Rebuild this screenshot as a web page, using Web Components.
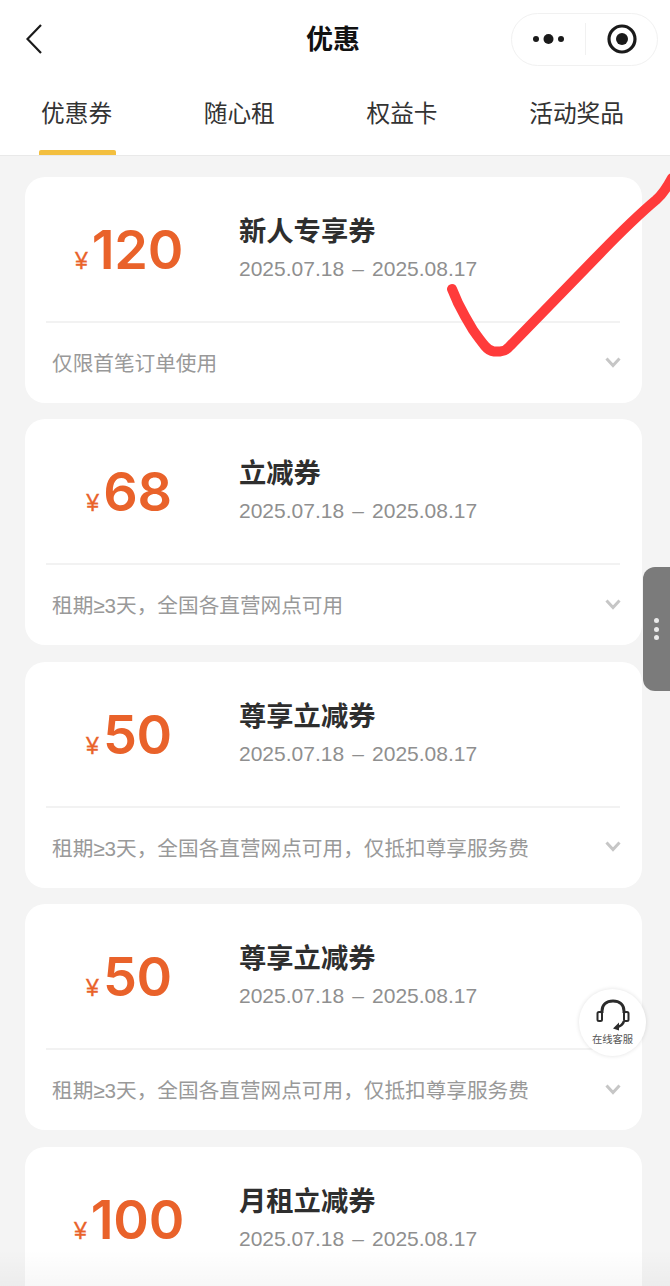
<!DOCTYPE html>
<html lang="zh">
<head>
<meta charset="utf-8">
<title>优惠</title>
<style>
    html, body {
        margin: 0;
        height: 1286px;
        overflow: hidden;
        background: #f4f4f4;
        font-family: "Liberation Sans", "Noto Sans CJK SC", sans-serif;
    }
    body {
        position: relative;
    }
</style>
</head>
<body>
<nav-bar>优惠</nav-bar>
<tab-bar>
    <tab-item active>优惠券</tab-item>
    <tab-item>随心租</tab-item>
    <tab-item>权益卡</tab-item>
    <tab-item>活动奖品</tab-item>
</tab-bar>
<coupon-list>
    <coupon-card amount="120">
        <span slot="title">新人专享券</span>
        <span slot="date">2025.07.18 – 2025.08.17</span>
        <span slot="note">仅限首笔订单使用</span>
    </coupon-card>
    <coupon-card amount="68">
        <span slot="title">立减券</span>
        <span slot="date">2025.07.18 – 2025.08.17</span>
        <span slot="note">租期≥3天，全国各直营网点可用</span>
    </coupon-card>
    <coupon-card amount="50">
        <span slot="title">尊享立减券</span>
        <span slot="date">2025.07.18 – 2025.08.17</span>
        <span slot="note">租期≥3天，全国各直营网点可用，仅抵扣尊享服务费</span>
    </coupon-card>
    <coupon-card amount="50">
        <span slot="title">尊享立减券</span>
        <span slot="date">2025.07.18 – 2025.08.17</span>
        <span slot="note">租期≥3天，全国各直营网点可用，仅抵扣尊享服务费</span>
    </coupon-card>
    <coupon-card amount="100">
        <span slot="title">月租立减券</span>
        <span slot="date">2025.07.18 – 2025.08.17</span>
    </coupon-card>
</coupon-list>
<bottom-fade></bottom-fade>
<check-mark></check-mark>
<side-handle></side-handle>
<service-button>在线客服</service-button>

<script>
class NavBar extends HTMLElement {
    constructor() {
        super();
        this.attachShadow({ mode: 'open' }).innerHTML = `
            <style>
                :host { display: block; background: #fff; }
                .bar { display: grid; grid-template-columns: 1fr auto 1fr; align-items: center; height: 78px; padding: 0 12px 0 8px; }
                .back { display: block; width: 16px; height: 30px; margin: -1px 0 0 18px; }
                .title { font-size: 27px; font-weight: 700; color: #111; line-height: 1; margin-top: 3px; }
                .capsule { justify-self: end; display: flex; align-items: center; width: 147px; height: 53px; box-sizing: border-box; border: 1px solid #f1f1f1; border-radius: 27px; }
                .capsule div { display: flex; align-items: center; justify-content: center; height: 32px; width: 73px; }
                .capsule div + div { border-left: 1px solid #f1f1f1; width: 71px; }
            </style>
            <div class="bar">
                <svg class="back" viewBox="0 0 16 30" fill="none" stroke="#1a1a1a" stroke-width="2.2">
                    <path d="M15 1 L1.5 15 L15 29"/>
                </svg>
                <span class="title"><slot></slot></span>
                <div class="capsule">
                    <div>
                        <svg width="34" height="12" viewBox="0 0 34 12" fill="#1a1a1a">
                            <circle cx="4" cy="6" r="3"/><circle cx="16.5" cy="6" r="5"/><circle cx="29" cy="6" r="3"/>
                        </svg>
                    </div>
                    <div>
                        <svg width="32" height="32" viewBox="0 0 32 32">
                            <circle cx="16" cy="16" r="13" fill="none" stroke="#1a1a1a" stroke-width="3.2"/>
                            <circle cx="16" cy="16" r="6" fill="#1a1a1a"/>
                        </svg>
                    </div>
                </div>
            </div>`;
    }
}

class TabBar extends HTMLElement {
    constructor() {
        super();
        this.attachShadow({ mode: 'open' }).innerHTML = `
            <style>
                :host { display: flex; justify-content: space-between; height: 77px; padding: 0 46px 0 41px; background: #fff; border-bottom: 1px solid #e9e9e9; }
            </style>
            <slot></slot>`;
    }
}

class TabItem extends HTMLElement {
    constructor() {
        super();
        this.attachShadow({ mode: 'open' }).innerHTML = `
            <style>
                :host { display: block; position: relative; font-size: 23.7px; line-height: 72px; height: 77px; color: #333; }
                :host([active])::after { content: ""; position: absolute; left: -2px; right: -4px; bottom: 0; height: 5px; border-radius: 2px 2px 0 0; background: #f3bf3f; }
            </style>
            <slot></slot>`;
    }
}

class CouponList extends HTMLElement {
    constructor() {
        super();
        this.attachShadow({ mode: 'open' }).innerHTML = `
            <style>
                :host { display: flex; flex-direction: column; gap: 16.4px; height: 1109px; overflow: hidden; padding: 21px 28px 0 25px; }
            </style>
            <slot></slot>`;
    }
}

const couponTemplate = document.createElement('template');
couponTemplate.innerHTML = `
    <style>
        :host { display: block; height: 226px; background: #fff; border-radius: 20px; flex: none; }
        .top { display: flex; height: 144px; box-sizing: border-box; }
        .amount { width: 204px; flex: none; padding: 43px 0 0 2px; text-align: center; line-height: 60px; color: #e9622a; font-family: Inter, "Liberation Sans", sans-serif; white-space: nowrap; }
        .num { font-size: 54px; font-weight: 600; letter-spacing: -0.3px; }
        .yen { font-family: "Liberation Sans", sans-serif; font-size: 23px; margin-right: 4px; -webkit-text-stroke: 0.3px #e9622a; }
        .info { margin-left: 8px; padding-top: 35px; }
        .title { display: block; font-size: 27.3px; font-weight: 700; line-height: 40px; color: #2e2e2e; }
        .date { display: block; margin-top: 3px; font-size: 21px; word-spacing: 2.3px; line-height: 28px; color: #8f8f8f; white-space: nowrap; }
        .line { height: 2px; margin: 0 22px 0 21px; background: #f2f2f2; }
        .foot { display: flex; align-items: center; justify-content: space-between; height: 78px; padding: 0 21px 2px 27px; font-size: 20.65px; color: #999; }
        .foot svg { flex: none; }
    </style>
    <div class="top">
        <div class="amount"><span class="yen">¥</span><span class="num"></span></div>
        <div class="info">
            <span class="title"><slot name="title"></slot></span>
            <span class="date"><slot name="date"></slot></span>
        </div>
    </div>
    <div class="line"></div>
    <div class="foot">
        <span><slot name="note"></slot></span>
        <svg width="16" height="11" viewBox="0 0 16 11" fill="none" stroke="#c6c6c6" stroke-width="3">
            <path d="M1.5 1.5 L8 8.5 L14.5 1.5"/>
        </svg>
    </div>`;

class CouponCard extends HTMLElement {
    constructor() {
        super();
        this.attachShadow({ mode: 'open' });
        this.shadowRoot.appendChild(couponTemplate.content.cloneNode(true));
        this.shadowRoot.querySelector('.num').innerText = this.getAttribute('amount');
    }
}

class BottomFade extends HTMLElement {
    constructor() {
        super();
        this.attachShadow({ mode: 'open' }).innerHTML = `
            <style>
                :host { display: block; position: absolute; left: 0; right: 0; bottom: 0; height: 36px; background: linear-gradient(rgba(0,0,0,0), rgba(0,0,0,.03)); }
            </style>`;
    }
}

// red hand drawn tick lying over the first card
class CheckMark extends HTMLElement {
    constructor() {
        super();
        this.attachShadow({ mode: 'open' }).innerHTML = `
            <style>
                :host { display: block; position: absolute; left: 440px; top: 170px; width: 230px; height: 190px; }
                svg { display: block; }
            </style>
            <svg width="230" height="190" viewBox="0 0 230 190" fill="none" stroke="#ff3b3b" stroke-width="10" stroke-linecap="round" stroke-linejoin="round">
                <path d="M12 119 L18 133 Q25 147 33 160 Q40 170 45 176 Q49 181 54 181.500 L60 181.500 Q66 181 70 176 L160 83.400 Q195 47.500 216 30 Q224 23 232 8"/>
            </svg>`;
    }
}

class SideHandle extends HTMLElement {
    constructor() {
        super();
        this.attachShadow({ mode: 'open' }).innerHTML = `
            <style>
                :host { display: flex; position: absolute; left: 643px; top: 567px; width: 27px; height: 124px; background: #7b7b7b; border-radius: 12px 0 0 12px; flex-direction: column; align-items: center; justify-content: center; gap: 3.5px; }
                i { display: block; width: 5px; height: 5px; border-radius: 50%; background: #ebebeb; }
            </style>
            <i></i><i></i><i></i>`;
    }
}

class ServiceButton extends HTMLElement {
    constructor() {
        super();
        this.attachShadow({ mode: 'open' }).innerHTML = `
            <style>
                :host { display: flex; position: absolute; left: 579px; top: 989px; width: 67px; height: 67px; box-sizing: border-box; padding-top: 10px; background: #fff; border-radius: 50%; box-shadow: 0 0 4px rgba(0,0,0,.12); flex-direction: column; align-items: center; font-size: 10.3px; line-height: 14px; color: #555; }
                svg { display: block; margin-bottom: 2px; }
            </style>
            <svg width="34" height="32" viewBox="0 0 34 32" fill="none" stroke="#2b2b2b">
                <path d="M6 14 V12 C6 5.500 10.500 2 17 2 C23.500 2 28 5.500 28 12 V14" stroke-width="3"/>
                <rect x="1.500" y="13" width="4.500" height="9" rx="1.500" stroke-width="2"/>
                <rect x="28" y="13" width="4.500" height="9" rx="1.500" stroke-width="2"/>
                <path d="M28 22 C27 26 24 27.500 20 28.500" stroke-width="2.600"/>
                <path d="M23 23.500 L17 29.500 L23 31.500 Z" fill="#2b2b2b" stroke="none"/>
            </svg>
            <slot></slot>`;
    }
}

window.customElements.define('nav-bar', NavBar);
window.customElements.define('tab-bar', TabBar);
window.customElements.define('tab-item', TabItem);
window.customElements.define('coupon-list', CouponList);
window.customElements.define('coupon-card', CouponCard);
window.customElements.define('bottom-fade', BottomFade);
window.customElements.define('check-mark', CheckMark);
window.customElements.define('side-handle', SideHandle);
window.customElements.define('service-button', ServiceButton);
</script>
</body>
</html>
